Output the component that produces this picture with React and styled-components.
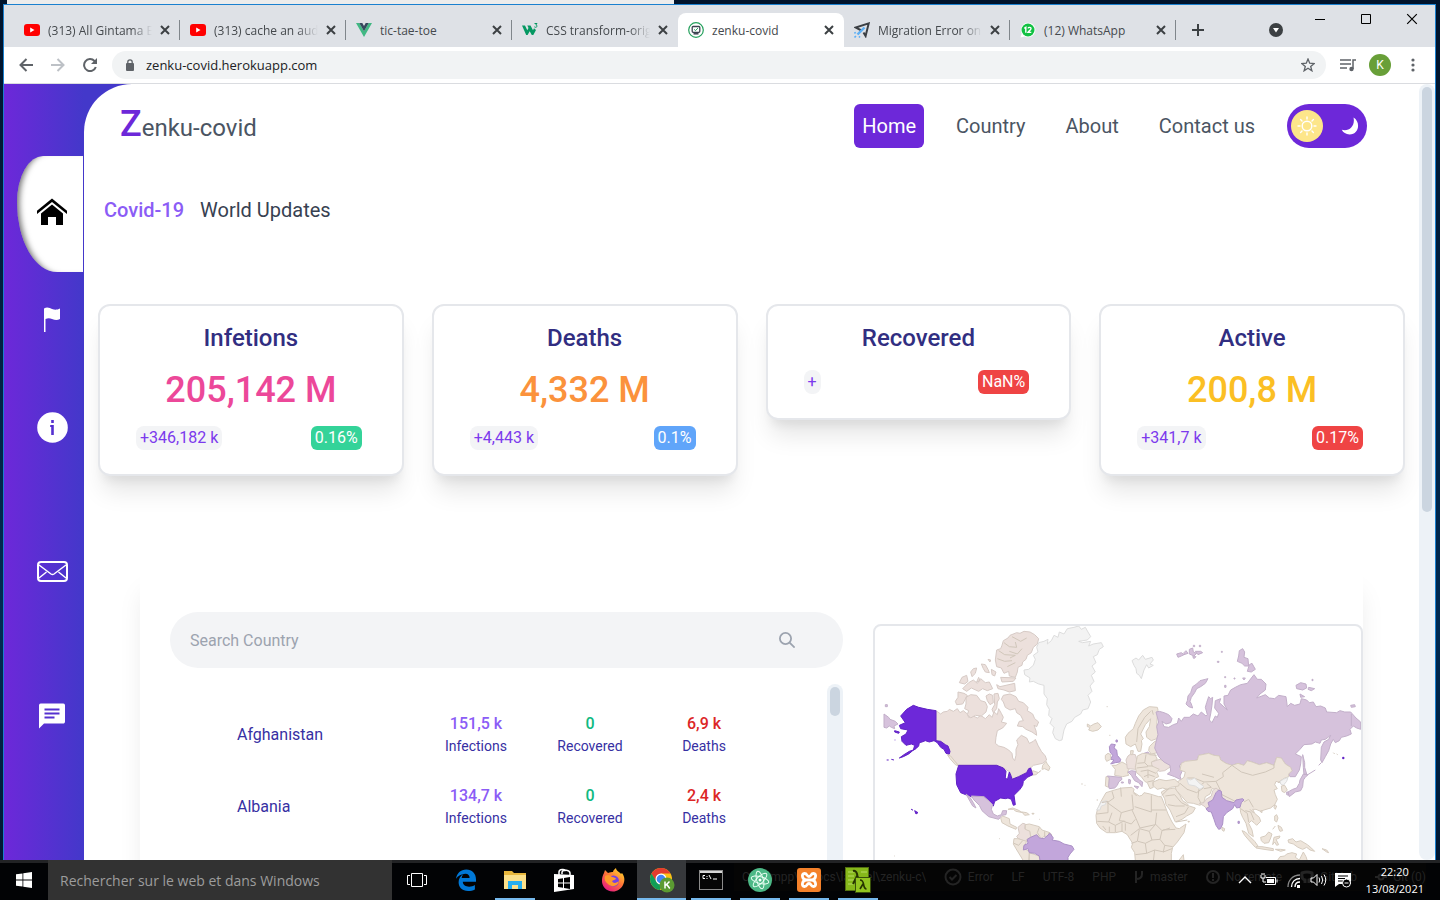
import React from "react";
import styled, { createGlobalStyle, css } from "styled-components";

const siteFont = `Roboto, "Open Sans", sans-serif`;
const systemFont = `"Open Sans", "Noto Sans", sans-serif`;

const GlobalStyle = createGlobalStyle`
  *, *::before, *::after { box-sizing: border-box; }
  body { margin: 0; background: #00132b; font-family: ${systemFont}; }
  button, input { font: inherit; border: 0; padding: 0; margin: 0; background: none; outline: 0; }
  h1, h2, p, ul { margin: 0; padding: 0; }
  ul { list-style: none; }
  a { color: inherit; text-decoration: none; }
  svg { display: block; flex: none; }
`;

/* ---------- desktop and browser window ---------- */

const Desktop = styled.div`
  height: 100vh;
  min-height: 600px;
  display: flex;
  flex-direction: column;
  overflow: hidden;
  background: linear-gradient(#00132b, #002a52 70%, #00132b);
`;

const BackWindowEdge = styled.div`
  flex: none;
  height: 4px;
  width: 46.3%;
  margin-left: 7px;
  background: #ececec;
`;

const BrowserWindow = styled.section`
  flex: 1;
  min-height: 0;
  margin: 0 4px 0 3px;
  display: flex;
  flex-direction: column;
  border: 1px solid #1a80cf;
  border-bottom: 0;
  background: #fff;
`;

const TabStrip = styled.div`
  flex: none;
  height: 42px;
  padding-left: 10px;
  display: flex;
  align-items: flex-end;
  background: #dee1e6;
`;

const Tab = styled.div`
  position: relative;
  width: 166px;
  height: 34px;
  padding: 0 10px;
  display: flex;
  align-items: center;
  gap: 8px;
  font-size: 12px;
  color: #45494d;
  ${(p) => p.$divided && css`
    &::after {
      content: "";
      position: absolute;
      right: 0;
      top: 7px;
      height: 20px;
      width: 1px;
      background: #80868b;
    }
  `}
  ${(p) => p.$active && css`
    background: #fff;
    border-radius: 8px 8px 0 0;
  `}
`;

const TabTitle = styled.span`
  flex: 1;
  min-width: 0;
  overflow: hidden;
  white-space: nowrap;
  ${(p) => p.$fade && css`
    mask-image: linear-gradient(90deg, #000 80%, transparent);
  `}
`;

const IconButton = styled.button`
  display: flex;
  align-items: center;
  justify-content: center;
  width: ${(p) => p.$width || 32}px;
  height: ${(p) => p.$height || 32}px;
  color: ${(p) => p.$color || "#5f6368"};
`;

const TabListButton = styled(IconButton)`
  margin-left: auto;
`;

const WindowControls = styled.div`
  align-self: flex-start;
  display: flex;
  margin-left: 7px;
`;

const Toolbar = styled.div`
  flex: none;
  height: 37px;
  padding: 0 6px;
  display: flex;
  align-items: center;
  border-bottom: 1px solid #dadce0;
`;

const AddressBar = styled.label`
  flex: 1;
  height: 28px;
  margin: 0 6px;
  padding: 0 2px 0 13px;
  display: flex;
  align-items: center;
  gap: 11px;
  border-radius: 14px;
  background: #f1f3f4;
  color: #5f6368;
`;

const AddressInput = styled.input`
  flex: 1;
  min-width: 0;
  font-size: 13px;
  color: #202124;
`;

const Avatar = styled.button`
  width: 22px;
  height: 22px;
  margin: 0 6px 0 5px;
  border-radius: 50%;
  background: #689f38;
  color: #fff;
  font-family: Roboto, sans-serif;
  font-size: 12px;
`;

/* ---------- site ---------- */

const Site = styled.div`
  flex: 1;
  min-height: 0;
  display: flex;
  overflow: hidden;
  font-family: ${siteFont};
  background: linear-gradient(90deg, #6d28d9, #4338ca 80px);
`;

const Sidebar = styled.nav`
  flex: none;
  width: 80px;
  padding-top: 72px;
  display: flex;
  flex-direction: column;
  color: #fff;
`;

const SideCurrent = styled.a`
  height: 116px;
  margin: 0 1px 32px 13px;
  padding: 0 16px 4px 20px;
  display: flex;
  align-items: center;
  color: #000;
  background: #fff;
  border-radius: 26px 0 0 40px / 46px 0 0 70px;
  box-shadow: inset 7px 0 6px -5px rgba(0, 0, 0, 0.6);
`;

const SideGroup = styled.div`
  padding-left: 32px;
  display: flex;
  flex-direction: column;
  gap: ${(p) => p.$gap}px;
  margin-bottom: 112px;
`;

const SideLink = styled.a`
  width: 32px;
  height: 32px;
  display: flex;
  align-items: center;
  justify-content: center;
`;

const Main = styled.main`
  flex: 1;
  min-width: 0;
  background: #fff;
  border-top-left-radius: 48px;
`;

const ScrollTrack = styled.div`
  flex: none;
  width: 16px;
  padding: 3px;
  border-radius: 8px;
  background: #edf2f7;
`;

const ScrollThumb = styled.div`
  height: ${(p) => p.$size};
  border-radius: 5px;
  background: #cbd5e0;
`;

const PageScroll = styled.div`
  display: flex;
  background: #fff;
`;

const Header = styled.header`
  height: 64px;
  padding: 20px 52px 0 36px;
  display: flex;
  align-items: center;
  justify-content: space-between;
`;

const Brand = styled.a`
  display: flex;
  align-items: baseline;
  font-size: 24px;
  line-height: 44px;
  color: #4b5563;
`;

const BrandInitial = styled.span`
  font-size: 36px;
  font-weight: 500;
  color: #6d28d9;
`;

const Menu = styled.nav`
  display: flex;
  align-items: center;
  gap: 24px;
`;

const MenuLink = styled.a`
  padding: 0 8px;
  border-radius: 6px;
  font-size: 20px;
  line-height: 44px;
  color: ${(p) => (p.$current ? "#fff" : "#4b5563")};
  background: ${(p) => (p.$current ? "#6d28d9" : "transparent")};
`;

const ThemeSwitch = styled.label`
  width: 80px;
  height: 44px;
  padding: 0 8px 0 4px;
  display: flex;
  align-items: center;
  justify-content: space-between;
  border-radius: 22px;
  background: #6d28d9;
  color: #fff;
`;

const SwitchInput = styled.input`
  appearance: none;
  position: absolute;
  width: 32px;
  height: 32px;
`;

const SwitchKnob = styled.span`
  width: 32px;
  height: 32px;
  display: flex;
  align-items: center;
  justify-content: center;
  border-radius: 50%;
  background: #fde68a;
`;

const PageTitle = styled.h1`
  margin: 48px 20px 80px;
  font-size: 20px;
  font-weight: 400;
  line-height: 28px;
  color: #374151;
`;

const TitleAccent = styled.span`
  margin-right: 16px;
  font-weight: 500;
  color: #8b5cf6;
`;

const CardGrid = styled.section`
  min-height: 172px;
  padding: 0 14px;
  display: grid;
  grid-template-columns: repeat(4, 1fr);
  align-items: start;
  gap: 28px;
`;

const Card = styled.article`
  padding: 16px 36px 24px;
  border: 2px solid #e5e7eb;
  border-radius: 12px;
  background: #fff;
  box-shadow: 0 20px 25px -5px rgba(0, 0, 0, 0.1), 0 10px 10px -5px rgba(0, 0, 0, 0.06);
`;

const CardTitle = styled.h2`
  margin-bottom: 16px;
  font-size: 24px;
  font-weight: 500;
  line-height: 32px;
  text-align: center;
  color: #312e81;
`;

const CardValue = styled.p`
  margin-bottom: 16px;
  font-size: 36px;
  font-weight: 500;
  line-height: 40px;
  text-align: center;
  white-space: nowrap;
  color: ${(p) => p.$color};
`;

const CardFooter = styled.div`
  padding-right: 4px;
  display: flex;
  justify-content: space-between;
  font-size: 16px;
  line-height: 24px;
`;

const Delta = styled.span`
  padding: 0 4px;
  border-radius: 8px;
  background: #f3f4f6;
  color: #7c3aed;
`;

const Rate = styled.span`
  padding: 0 4px;
  border-radius: 6px;
  background: ${(p) => p.$color};
  color: #fff;
`;

const Panel = styled.section`
  margin: 88px 56px 0;
  padding: 48px 0 0 30px;
  display: grid;
  grid-template-columns: 673fr 490fr;
  gap: 30px;
  background: #fff;
  box-shadow: 0 25px 25px -5px rgba(0, 0, 0, 0.1);
`;

const SearchBox = styled.label`
  height: 56px;
  padding: 0 48px 0 20px;
  display: flex;
  align-items: center;
  border-radius: 28px;
  background: #f3f4f6;
  color: #9ca3af;
`;

const SearchInput = styled.input`
  flex: 1;
  min-width: 0;
  font-size: 16px;
  &::placeholder { color: #9ca3af; opacity: 1; }
`;

const CountryList = styled.div`
  height: 320px;
  margin-top: 16px;
  display: flex;
`;

const CountryTable = styled.table`
  flex: 1;
  height: 144px;
  margin: 14px 66px 0 67px;
  table-layout: fixed;
  border-collapse: collapse;
`;

const CountryRow = styled.tr`
  height: 72px;
`;

const CountryName = styled.th`
  padding: 0;
  font-size: 16px;
  font-weight: 400;
  text-align: left;
  color: #3730a3;
`;

const StatCell = styled.td`
  width: 114px;
  padding: 0;
  text-align: center;
`;

const StatValue = styled.div`
  font-size: 16px;
  font-weight: 500;
  line-height: 24px;
  color: ${(p) => p.$color};
`;

const StatLabel = styled.div`
  font-size: 14px;
  line-height: 20px;
  color: #3730a3;
`;

const MapCard = styled.div`
  margin-top: 12px;
  border: 2px solid #e5e7eb;
  border-radius: 8px;
  overflow: hidden;
  svg { width: 100%; height: auto; }
`;

/* ---------- taskbar ---------- */

const Taskbar = styled.footer`
  position: relative;
  flex: none;
  height: 40px;
  display: flex;
  background: #020305;
  border-top: 3px solid #222325;
  color: #fff;
`;

const GhostStatus = styled.div`
  position: absolute;
  left: 734px;
  right: 14px;
  top: 0;
  height: 28px;
  padding-left: 8px;
  display: flex;
  align-items: center;
  gap: 18px;
  font-family: Roboto, sans-serif;
  font-size: 12px;
  white-space: nowrap;
  overflow: hidden;
  background: #050505;
  color: #242424;
`;

const GhostPath = styled.span`
  width: 187px;
  overflow: hidden;
`;

const GhostItem = styled.span`
  display: flex;
  align-items: center;
  gap: 6px;
`;

const TaskbarItems = styled.div`
  position: relative;
  flex: 1;
  margin-top: -3px;
  display: flex;
`;

const StartButton = styled.button`
  width: 48px;
  display: flex;
  align-items: center;
  justify-content: center;
`;

const TaskSearch = styled.input`
  width: 344px;
  padding: 0 12px;
  font-size: 14px;
  background: #323232;
  &::placeholder { color: #9d9d9d; opacity: 1; }
`;

const TaskButton = styled.button`
  width: 49px;
  display: flex;
  align-items: center;
  justify-content: center;
  ${(p) => p.$open && css`
    background: linear-gradient(#76b9ed, #76b9ed) bottom / 40px 2px no-repeat;
  `}
  ${(p) => p.$current && css`
    background: linear-gradient(#76b9ed, #76b9ed) bottom / 100% 2px no-repeat #36383b;
  `}
`;

const Tray = styled.div`
  margin-left: auto;
  padding-right: 16px;
  display: flex;
  align-items: center;
  gap: 8px;
`;

const Clock = styled.time`
  margin-left: 6px;
  font-size: 11px;
  line-height: 17px;
  text-align: center;
`;

/* ---------- small icons ---------- */

const Cross = ({ size = 10, weight = 2 }) => (
  <svg width={size} height={size} viewBox="0 0 10 10" stroke="currentColor" strokeWidth={weight}>
    <path d="M1 1l8 8M9 1l-8 8" />
  </svg>
);

const YouTubeIcon = () => (
  <svg width="16" height="16" viewBox="0 0 16 16">
    <rect y="2" width="16" height="12" rx="3" fill="#f00" />
    <path d="M6.2 5.5v5l4.3-2.5z" fill="#fff" />
  </svg>
);
const VueIcon = () => (
  <svg width="16" height="16" viewBox="0 0 16 16">
    <path d="M0 1h3.3L8 9.2 12.7 1H16L8 15z" fill="#41b883" />
    <path d="M3.3 1h3L8 4l1.7-3h3L8 9.2z" fill="#35495e" />
  </svg>
);
const W3Icon = () => (
  <svg width="16" height="16" viewBox="0 0 16 16" fill="#059862">
    <path d="M0 3.500h3l2.300 4.700L6.500 6 5.300 3.500h3.200L11 8.200l1-2 2 1.800-2.700 5H9.800L7.700 9.200 5.600 13H4.200z" />
    <path d="M12.500 1.500h2.500L13.800 3c1.600 0 1.600 2.300-.2 2.300-.6 0-1-.2-1.300-.6" fill="none" stroke="#059862" strokeWidth="1" />
  </svg>
);
const ZenkuIcon = () => (
  <svg width="16" height="16" viewBox="0 0 16 16" fill="none">
    <circle cx="8" cy="8" r="7.3" stroke="#24a05c" strokeWidth="1.2" />
    <rect x="4.2" y="4.5" width="7.6" height="5.8" rx="1" stroke="#3c4350" strokeWidth="1.3" />
    <path d="M5.500 11.800h5" stroke="#3c4350" strokeWidth="1.500" />
    <path d="M6.200 7.400l1.300 1.200 2.400-2.500" stroke="#24a05c" strokeWidth="1" />
  </svg>
);
const PlaneIcon = () => (
  <svg width="16" height="16" viewBox="0 0 16 16" fill="none">
    <path d="M7.500 8.500L1.500 5.500 14.700 1.400 11.600 14 9.500 10.500" stroke="#3b3f44" strokeWidth="2" />
    <path d="M10.500 5.500l-7 7" stroke="#5eb0f5" strokeWidth="2.400" />
    <path d="M.5 15.500l1.500-1.500M5 15.500l1-1.200M.3 11.300l1.500-1" stroke="#5eb0f5" strokeWidth="1.600" />
  </svg>
);
const WhatsAppIcon = () => (
  <svg width="16" height="16" viewBox="0 0 16 16">
    <path d="M.5 15.500l1.200-4A7.300 7.300 0 1 1 4.600 14.400z" fill="#fff" />
    <circle cx="8" cy="8" r="6.500" fill="#12c143" />
    <path d="M4.300 6.300l1.500-1v5.400M8 6.400c.5-1.500 3.200-1.300 3 .4-.1 1.200-2 2-3 3.600h3.300" fill="none" stroke="#fff" strokeWidth="1.400" />
  </svg>
);

const tabs = [
  { title: "(313) All Gintama En", icon: YouTubeIcon, fade: true, divided: true },
  { title: "(313) cache an audi", icon: YouTubeIcon, fade: true, divided: true },
  { title: "tic-tae-toe", icon: VueIcon, divided: true },
  { title: "CSS transform-origi", icon: W3Icon, fade: true },
  { title: "zenku-covid", icon: ZenkuIcon, active: true },
  { title: "Migration Error on", icon: PlaneIcon, fade: true, divided: true },
  { title: "(12) WhatsApp", icon: WhatsAppIcon, divided: true },
];

const cards = [
  { title: "Infetions", value: "205,142 M", color: "#ec4899", delta: "+346,182 k", rate: "0.16%", rateColor: "#34d399" },
  { title: "Deaths", value: "4,332 M", color: "#fb923c", delta: "+4,443 k", rate: "0.1%", rateColor: "#60a5fa" },
  { title: "Recovered", delta: "+", rate: "NaN%", rateColor: "#ef4444" },
  { title: "Active", value: "200,8 M", color: "#fbbf24", delta: "+341,7 k", rate: "0.17%", rateColor: "#ef4444" },
];

const countries = [
  { name: "Afghanistan", infections: "151,5 k", recovered: "0", deaths: "6,9 k" },
  { name: "Albania", infections: "134,7 k", recovered: "0", deaths: "2,4 k" },
];

/* ---------- world map ---------- */

const sand = { fill: "#eee5db", stroke: "#d6ccc0" };
const rose = { fill: "#ece0dc", stroke: "#d6cac5" };
const mist = { fill: "#f3f3f3", stroke: "#dcdcdc" };
const lilac = { fill: "#d6c2dc", stroke: "#c2afc9" };
const orchid = { fill: "#c2a6db", stroke: "#ab90c6" };
const violet = { fill: "#6d28d9", stroke: "#5f20c4" };
const lines = { fill: "none", stroke: "#d0c6ba" };

const westShapes = [
  [rose, "M228 302L242 312 250 306 262 304 268 298 280 304 292 296 300 308 310 302 322 312 326 322 340 318 352 324 362 316 376 326 388 314 396 322 402 306 412 314 416 296 424 310 430 322 424 336 440 340 428 354 412 362 408 382 406 400 416 408 432 412 446 420 456 430 458 444 464 452 468 436 468 418 474 404 470 390 484 376 500 384 508 400 520 394 526 388 534 406 544 424 556 438 560 450 548 460 520 466 506 480 498 488 478 498 458 508 450 486 430 474 410 466H296L268 438 260 422 240 398 228 392Z"],
  [rose, "M430 256l20-4 18 8 8 14 14 4 14 14-2 10 16 10 6 14 12 10-6 14-8-4 6 16 2 14-14-10-18-8-10-8-16-2 6-14 12-2-8-16-12-8-4-12-16 4-14-8-6-16-6-8Z"],
  [rose, "M318 262l14-8 18 2 12 16 14 4 6 14-4 16-14 12-18-2-14 8-10-10 4-12-12-6 4-14ZM294 246l18 4 10 6-14 26-18 2-4-10 8-12ZM378 258l10-6 10 4 2 22-10 6-8-12ZM402 252l12-2 4 16-6 10-2 20-10 12-4-10 8-14Z"],
  [rose, "M430 92l14-8 6-8 20-8 10 2 12-6 18 2 14 8 12 12-4 16-12 10-6 16-12 8-4 12-10 8-2 10-12 6-2 14-6 16-18-4-2-14-14 6-8-16-14-4-4-20 4-30 12-4 4-10Z"],
  [lines, "M432 98l16 12 22 2-4-16M416 122l18 12 32 2-16 8M412 146l22 8 22-2M456 80l26 14 18-10M448 124l24 8 14-16M442 170l24-12"],
  [rose, "M298 218l8-16 14-6 4 18-10 8ZM326 218l14-8 12 10 10-14 14 12 12-2 10 20-16 6-14-6-12 8-22-10-14 10-12-8ZM410 224l10 6 44-10 2 22-18 4-16-6-18-4ZM332 186l8-10 10-2-4 16-10 10ZM364 162l12 2 8 14 4 10-12-2-6-10ZM394 178l14 8-4 12-8-4ZM422 202l46 2-8 10-34 2ZM384 148l8 2-2 6ZM350 216l6-14 4 10Z"],
  [sand, "M518 482l18 6 6-6-14 12-14 2ZM548 466l10-12 4 8 8 10-4 10-12-6-8 2ZM262 434l10 4 24 30-10-4-16-18ZM682 342l10 6 10-6 12-4 10 12-10 10-16 4-12-4 4-8-8-2Z"],
  [mist, "M536 98L552 94 564 88 562 102 574 92 582 76 594 82 598 66 612 72 622 56 642 52 656 48 664 58 676 52 684 66 692 80 682 90 656 94 668 98 692 94 686 108 700 102 724 98 730 110 718 118 712 134 700 140 708 158 696 168 706 186 694 196 702 214 690 228 696 244 684 256 692 276 684 296 668 300 662 312 644 322 636 334 620 342 612 360 606 390 598 392 586 386 578 368 582 352 570 340 576 326 566 316 568 298 560 284 562 266 552 252 552 226 536 222 520 214 508 216 510 204 494 194 492 180 506 178 520 166 526 148 520 136 534 126 530 112Z"],
  [mist, "M816 152l12-8 8 6 12-14 8 12 20-6 4 8-10 12 10 4-14 8-6-10-8 16-8 26-6-10-8-6-2-14-6-10Z"],
  [violet, "M228 302v90l14 2 14 10 8 4 6 16-2 8-10-2-6-12-10-6-10-14-10-6-14 4-12-4-10 4-8 2-2 10-8 8-10 6-12 10-16 8-12 4 14-10 16-10 12-4 4-14-10-4-16 4-12-12-2-14 14-8 6-12-22-4-4-10 18-8-14-20 18-20 20-12 16 6 26 6Z"],
  [violet, "M104 362l14 4-2 4-12-4ZM154 598l4 2ZM164 602l10 6-6 4ZM80 450h6M94 448l8 2M104 390h2"],
  [violet, "M296 466H410l20 8 8 10-2 18 6 8 6-24 6 14 2 8 20-8 24-12 6-12 6-2 6 20-16 8-12 12-2 12-8 12-18 18 4 28-6 2-6-18-10-4-8 2-14-2-18 10-4 14-10-8-4-8-14-6-10 0-16-2-24-8-20-8-12-24-2-32Z"],
  [lilac, "M72 312l14 10 4 6 16 6 8 8-12 6 2 8-10-4-6-4-8 6-8-2ZM76 284h6v6h-6Z"],
  [lilac, "M318 552l12 10 10 16 8 16-10-6-8-14ZM334 558l38 2 16 14 10 10-4 14 6 14 12 6 12-4 4-12h12l-2 12-12 2-10 12-30-8-20-18-8-16-16-16Z"],
  [sand, "M422 624l6-6 20 8 2 16 20 10-2 6-24-10-18-10ZM444 598l14-4 16 6 14 8-20-4-8-6ZM486 606l14 2 8 6-14 2ZM516 610h6v2h-6Z"],
  [rose, "M474 652l14-12 8 2-2 14 16 6 2 20-12 6 0 8-24-10-6-6 8-10Z"],
  [sand, "M496 644l12-2 30 8 8 10 24 8 6 8-10 6-12-4-10 8-14-10-18 6-2-18-14-6ZM474 686l26 8-10 18 18 14 0 26H490l-22-36-8-14 2-16ZM508 728l28 10 6 14h-36Z"],
  [lines, "M538 652l-6 16 8 12M554 664v18M566 668v14M462 700l14 6 12-14M508 730l12-4"],
  [orchid, "M512 682L530 674 538 684 552 686 570 670 580 684 576 690 598 694 612 702 636 708 642 718 630 732 624 742 624 752H540L538 738 524 730 508 728 504 716 490 720 492 706 504 700 502 688Z"],
  [orchid, "M748 410l6-8 12 2-4 10 8 6 2 16 10 12-2 8-14 2-14 4 10-12-10-2 6-12-8-10ZM768 390h4v6h-4Z"],
  [sand, "M736 436l8-6 8 4 0 14-12 6-4-8ZM756 466l12 0 18-10 18 10 4 10-6 10 4 10-18 4-24-4 2-18ZM738 500h10l-2 32-10-4Z"],
  [lilac, "M742 498l42 4 2 6-10 8-4 10-8 8-16 2-2-8 2-24ZM852 430l12-4 4 6-12 4ZM784 516h6v3h-6Z"],
  [rose, "M804 438l8-6 14 2 6 22-6 14 2 8-26-2-2-16-2-10ZM874 456l26-8 28 14 4 8-18 12-16 2-14-8-12-4Z"],
  [lilac, "M804 486l10-4 14 2-2 12 12 14 10 6-2 14-10-12-12-6-10-16ZM822 528l14 2-4 6ZM806 508l6 2-2 12-4-2Z"],
  [sand, "M832 438l16-8 20 2 14-4 10 20-18 8 2 12 22 10-8 8 6 14-10 4-8 14 2 14-10 4-8-18-8-4-10-14-14-12-4-16Z"],
  [lines, "M832 460l22-2 10 10 14 0M854 458l4-24M830 474l34-4M842 484l22-4 24 10M852 500l14-6 18 6M862 516l18-4M868 434l22 2M864 480v24"],
  [sand, "M868 410l14-14 8-4 2 36-18 4-8-10ZM892 292L868 290 850 300 836 318 826 340 820 356 804 370 796 382 798 402 812 410 826 402 834 424 842 424 846 402 844 392 850 386 842 372 856 344 872 326 868 350 858 366 860 382 874 392 890 386 898 368 890 348 892 318 894 300ZM812 422h8l-2 12h-6Z"],
  [lines, "M872 304l-18 18-20 34-4 40M876 300l4 14"],
  [sand, "M738 548L764 540 786 534 816 532 822 538 820 546 838 558 846 556 852 548 870 552 896 560 904 560 912 580 924 612 936 636 948 654 958 656 978 642 972 668 952 696 938 712 934 730 934 752H826L824 728 814 712 818 700 808 684 802 674 786 664 766 668 740 668 720 654 710 640 708 616 712 600 722 576Z"],
  [mist, "M710 600l14-24 16-4-4 12-12 4-4 12Z"],
  [lines, "M726 578l18-4 0 34-34 4M756 544l6 20-20 14 42 30-6 24M784 560l-2-28M784 608l36-10-4-44M816 600l14 30M824 590l50 16v-50M874 600h44M830 630l10 24 46-10 4-36M886 642l20 20 24-8M712 634l34 2 20 10v20M746 636l10-28M766 646l24-12 24 8 12-14M786 664v-24M812 676l26-20 30 8 18-20M838 658l-6 36-18 6M868 664l8 26-20 10-22-6M876 690l24-2 6-26M900 688l14 18-4 20 26-10M856 700l4 30-34 4M860 730l24-10 28 6M884 720l-4 34M914 706l24 4M908 660l38-2M728 648l10 12M748 650v16M796 640v22M778 632l18 2M820 548l10 10"],
  [lines, "M418 686h2M102 738h2M664 522h4M674 526h2M710 570h4M740 290h3M748 376h3M538 628h2"],
];

const eastShapes = [
  [lilac, "M48 306L58 304 72 308 86 314 96 326 92 338 78 342 66 334 72 350 86 352 100 344 112 340 116 324 124 334 132 322 148 322 160 312 174 318 184 306 198 318 202 314 196 292 200 278 206 260 212 266 218 262 216 286 212 312 208 330 216 338 226 318 232 322 236 310 224 294 226 272 242 266 238 278 262 300 252 282 252 258 264 256 272 240 286 232 302 224 322 220 334 204 342 194 352 208 364 208 378 222 376 240 360 252 350 264 376 254 388 264 404 266 416 256 438 260 442 290 452 280 464 286 480 282 484 266 500 270 508 278 520 276 528 290 542 288 556 294 560 306 590 308 600 302 614 306 632 306 648 324 662 336V358L650 354 640 348 630 358 634 372 620 378 604 382 598 392 586 398 580 388 572 402 566 422 556 440 546 458 542 450 544 412 552 396 566 388 572 376 556 388 544 390 540 400 526 396 516 402 492 404 480 418 466 432 484 440 482 462 478 480 466 500 450 500 446 492 456 482 452 472 436 462 424 444 410 442 402 466 380 458 358 464 336 456 322 452 312 466 294 460 276 466 258 460 242 450 238 438 222 436 206 430 176 436 172 450 152 454 124 460 118 468 126 484 120 498 124 510 104 500 82 492 92 484 90 466 72 456 64 448 56 440 44 414 48 396 54 374 50 350 56 336Z"],
  [lilac, "M204 206l-8 2-16 4-10 10-12 8-6 18-8 10-2 14-4 10 8 8 12 4-4-12-4-8 4-12 10-14 6-12 12-6 14-10ZM298 122l10-6 6 10-2 16 12 4 2 22-12 0-8-8-14-6 4-16ZM328 164l8-4 10 18-12 8-12-2ZM468 226l14-8 16 4 2 12-12 6-18-4ZM506 232l18 4-10 6-10-4ZM480 252l14 8-12 2ZM632 286l12-2 2 6-12 2ZM110 132l14-4 8 6-8 4-10 4ZM132 128l6-6 6 8-12 4ZM148 118l10-4 2 12 10 4-8 8-14-6ZM166 124h16l6 4-14 6ZM158 140h10l-6 6ZM178 106h4v4h-4ZM160 106h4v4h-4ZM244 124h3v3h-3ZM232 154h5v3h-5ZM254 200h3v3h-3ZM282 204h3v3h-3ZM308 204l8 0-4 6ZM516 208h3v4h-3ZM254 226h4v6h-4Z"],
  [lilac, "M488 434l6 24 0 14 6 20-8 2-2-22ZM490 492l14 2-8 8-6 8-2 20-6 12-16 4-18 14-4-14 14-8 12-4 8-14 2-10ZM440 546h4l2 10-6-2Z"],
  [lilac, "M634 312v36M500 496l26-16M536 466l8-8"],
  [lines, "M580 428l4 4M590 432l3 2"],
  [violet, "M608 442h4v4h-4Z"],
  [sand, "M124 460L136 454 172 450 176 436 206 430 222 436 238 438 242 450 258 460 276 466 294 460 312 466 322 452 336 456 358 464 380 458 402 466 410 442 424 444 436 462 452 472 456 482 446 492 446 500 430 506 420 518 408 514 404 524 412 536 402 540 406 554 412 568 404 584 392 594 372 600 362 604 348 598 338 598 344 610 358 622 362 634 350 646 342 638 334 632 326 640 336 660 340 680 326 670 318 640 308 622 302 608 300 592 284 582 252 574 242 556 232 538 216 536 210 552 196 560 192 576 180 586 160 580 142 578 126 560 108 540 104 520 118 512 132 502 136 486 120 480Z"],
  [lines, "M276 466l-28 22 2 12-22 14-36 2-30-12-20 0M228 514l10 20 8 20 40 20M276 466l28 20 34 10 38-10 26-12 0-10M192 518l-14 10-4 34 10 20M222 502l-36-10M250 574l34 6M312 576l14-8 14 24M316 602l16 4 10 24M302 596l20 14 4 26M414 518l14-10M142 538l28 10 22-16M120 520l24 20M200 520l14 12-22 4M330 598l12 12"],
  [mist, "M140 506l12 4 12-6 12 14 16 12-12 8-14-10-20-4ZM420 514l10-6 14-6-4 12-10 12-8-4Z"],
  [sand, "M424 528l10-2 8 14-8 8-8-4ZM40 516l18-8 20 4 26-4 14 12-2 8-24 4-10 6-14-4-16 4-12-10ZM64 546l14-8 26-4 16 22 8 16 12 8 8 8 18 6-8 14-18 10-14 10-20 8-8-18-8-18-12-16-4-18-8-14Z"],
  [lines, "M76 558l28-4 20 24 20 10M84 584l22 4 28 0M108 620l26-10 12-20M66 556l20-20M108 636l34-6"],
  [rose, "M178 580l14-2 6-10 16-10 4-16 10-8 10 8-8 16-10 18-8 18-12 2-8-8Z"],
  [orchid, "M228 548l8-8 8 4 2 18 14 10 22 6 6-8 20-4 4 4-8 8-4 14-10 2-6-10-6 12-18 12-10 12-2 22-6 14-6 2-8-12-6-18-8-22-10-2-6-8 10-6-4-12 14-8ZM294 634h4v6h-4Z"],
  [sand, "M246 652l8 4-2 8-6-4ZM306 662l10 4 16 16 12 12 10 14-8 4-20-22-12-14ZM350 710l16 0 34 6 0 6-28-4-24-4ZM362 682l14-4 10-12 10 6-4 12-6 14-14 2-8-8ZM402 682l18-4-2 6-10 4 8 16-6 2-6-10-6 8ZM404 618l6-4 4 10-4 12-6-4ZM414 646l10 6 4 10-8 2-4-8ZM398 658l8-10M444 690l14-4 10 10 14-4 20 12 10 8 12 12-14-4-10-8-12 6-14-6-14-10-14-4ZM404 584l6 4-4 10-4-6ZM360 604l6-2v6ZM412 752l8-12 14-2 6-6 16-4 14 4-4 10 12 8 12-24 8 14 4 12ZM116 752l14-18 2 18ZM406 718l16 0 14 2-14 4ZM546 716l14 4 6 8-6-2ZM144 634h4v2h-4Z"],
];

const WorldMap = () => (
  <svg viewBox="0 0 486 300" role="img" aria-label="World map of infections" strokeWidth="3" strokeLinejoin="round">
    <g transform="translate(-15 -16) scale(.33333)">
      {westShapes.map(([paint, d]) => <path key={d} d={d} {...paint} />)}
    </g>
    <g transform="translate(265 -16) scale(.33333)">
      {eastShapes.map(([paint, d]) => <path key={d} d={d} {...paint} />)}
    </g>
  </svg>
);

/* ---------- taskbar drawings ---------- */

const EdgeIcon = () => (
  <svg width="22" height="22" viewBox="0 0 22 22" fill="#0078d7">
    <path d="M1 9.800C1.800 4.300 5.700.5 11.300.5 17 .5 21 4.600 21 10.300v2.500H7.800c.2 3.300 3 4.900 6.300 4.900 2.300 0 4.200-.6 5.800-1.600v4.300c-2 1-4.200 1.500-6.800 1.500-6 0-9.500-3.500-9.500-8.600 0-3.600 1.800-6.500 5-8.300-1.300 1.300-1.800 2.600-1.900 4.100h7.900c0-2.700-1.300-4.300-4.200-4.300C6.300 4.800 2.900 7 1 9.800z" />
  </svg>
);
const FolderIcon = () => (
  <svg width="24" height="20" viewBox="0 0 24 20">
    <path d="M1 1h8l2 2h12v15H1z" fill="#e8b73c" />
    <path d="M1 5h22v14H1z" fill="#fbe08a" />
    <path d="M5 19v-8h14v8h-4v-4H9v4z" fill="#25aef0" />
  </svg>
);
const StoreIcon = () => (
  <svg width="22" height="24" viewBox="0 0 22 24">
    <path d="M6 7V4c0-3 6-3.500 7-1M9 6V4c1-3 8-2 8 1v2" fill="none" stroke="#fff" strokeWidth="1.500" />
    <path d="M1 6l20 1v14L1 24z" fill="#fff" />
    <path d="M5 11l5-.8v4.300H5zM11 10l6-1v5.500h-6zM5 15.500h5v4.300l-5-.8zM11 15.500h6V21l-6-1z" fill="#000" />
  </svg>
);
const FirefoxIcon = () => (
  <svg width="24" height="24" viewBox="0 0 24 24">
    <defs>
      <linearGradient id="fox" x1=".9" y1="0" x2=".2" y2="1">
        <stop offset="0" stopColor="#ffe226" /><stop offset=".5" stopColor="#ff7139" /><stop offset="1" stopColor="#e31587" />
      </linearGradient>
    </defs>
    <path d="M3 5l1-3 3 3c2-1 4-1 5-1 0-2 2-3 3-4 0 3 4 4 5 6l1-1c3 4 3 8 1 12-2 4-6 6.500-10 6.500C5 23.500.5 18 1 12c0-3 1-5 2-7z" fill="url(#fox)" />
    <circle cx="12.500" cy="13" r="5.500" fill="#7542e5" />
    <path d="M4 8c3-2 5-1 7 1 2 0 4 1 4 2-1 1-3 1-4 2 1 3 5 2 7 0-1 5-7 7-11 3-3-2-4-5-3-8z" fill="#ff9a2a" />
  </svg>
);
const ChromeIcon = () => (
  <svg width="26" height="26" viewBox="0 0 26 26">
    <circle cx="12" cy="12" r="11" fill="#fbc116" />
    <path d="M2.500 6.500A11 11 0 0 1 21.500 6.500H12L7 15z" fill="#e33b2e" />
    <path d="M2.500 6.500L8 15.500l5 2L11 23A11 11 0 0 1 2.500 6.500z" fill="#109d58" />
    <circle cx="12" cy="12" r="5.500" fill="#fff" /><circle cx="12" cy="12" r="4.300" fill="#4285f4" />
    <circle cx="18" cy="18" r="7.500" fill="#5b9a32" />
    <path d="M16 14.500v7M20.500 14.500l-4 4M17.800 17.500l3 4" stroke="#fff" strokeWidth="1.500" fill="none" />
  </svg>
);
const ConsoleIcon = () => (
  <svg width="24" height="20" viewBox="0 0 24 20" fill="none">
    <rect x=".5" y=".5" width="23" height="19" fill="#050505" stroke="#8a8a8a" />
    <path d="M1 2h22" stroke="#d8d8d8" strokeWidth="2" />
    <path d="M6 5.500H4v3h2M8 6v1M8 8v1M10 5l2 4M14 9h4" stroke="#fff" />
  </svg>
);
const AtomIcon = () => (
  <svg width="24" height="24" viewBox="0 0 24 24" fill="none">
    <circle cx="12" cy="12" r="12" fill="#4cb886" />
    <g stroke="#eafff4" strokeWidth="1">
      <ellipse cx="12" cy="12" rx="9" ry="3.300" transform="rotate(15 12 12)" />
      <ellipse cx="12" cy="12" rx="9" ry="3.300" transform="rotate(75 12 12)" />
      <ellipse cx="12" cy="12" rx="9" ry="3.300" transform="rotate(-45 12 12)" />
    </g>
    <circle cx="12" cy="12" r="1.500" fill="#fff" />
  </svg>
);
const XamppIcon = () => (
  <svg width="24" height="24" viewBox="0 0 24 24" fill="none">
    <rect width="24" height="24" rx="3" fill="#f4812a" />
    <path d="M9 12h6M9.500 12C5 12 4 5.500 7.500 5.500c3 0 2 3 4.500 3s1.500-3 4.500-3C20 5.500 19 12 14.500 12 19 12 20 18.500 16.500 18.500c-3 0-2-3-4.500-3s-1.500 3-4.500 3C4 18.500 5 12 9.500 12z" stroke="#fff" strokeWidth="2.800" />
  </svg>
);
const LambdaIcon = () => (
  <svg width="26" height="26" viewBox="0 0 26 26" fill="none">
    <rect x=".5" y=".5" width="23" height="23" fill="#86b81b" stroke="#53700f" />
    <path d="M3 5h6M3 9h6M3 13h6M3 17h6M16 5h6" stroke="#b8dc66" />
    <path d="M8 4c3-1 4 2 4.500 5l2 7M12 9l-4 8" stroke="#263300" strokeWidth="2" />
    <rect x="10.500" y="10.500" width="15" height="15" fill="#92c520" stroke="#38500a" />
    <path d="M15 13c2 0 3 1 3.500 4 .5 3 1 5 3 5M18 17l-3 5" stroke="#263300" strokeWidth="1.600" />
  </svg>
);

const apps = [
  { name: "Edge", icon: EdgeIcon },
  { name: "File explorer", icon: FolderIcon, open: true },
  { name: "Store", icon: StoreIcon },
  { name: "Firefox", icon: FirefoxIcon },
  { name: "Chrome", icon: ChromeIcon, current: true },
  { name: "Command prompt", icon: ConsoleIcon, open: true },
  { name: "Atom", icon: AtomIcon, open: true },
  { name: "XAMPP", icon: XamppIcon, open: true },
  { name: "Cmder", icon: LambdaIcon, open: true },
];

function BrowserChrome() {
  return (
    <>
      <TabStrip>
        {tabs.map(({ title, icon: Icon, active, fade, divided }) => (
          <Tab key={title} $active={active} $divided={divided}>
            <Icon />
            <TabTitle $fade={fade}>{title}</TabTitle>
            <IconButton $width={10} $height={10} $color="#3c4043" aria-label="Close tab"><Cross /></IconButton>
          </Tab>
        ))}
        <IconButton $width={44} $height={34} $color="#3c4043" aria-label="New tab">
          <svg width="12" height="12" stroke="currentColor" strokeWidth="2"><path d="M6 0v12M0 6h12" /></svg>
        </IconButton>
        <TabListButton $width={28} $height={34} aria-label="Search tabs">
          <svg width="14" height="14"><circle cx="7" cy="7" r="7" fill="#3c4043" /><path d="M4 5h6L7 9.500z" fill="#fff" /></svg>
        </TabListButton>
        <WindowControls>
          <IconButton $width={46} $height={28} $color="#000" aria-label="Minimize">
            <svg width="10" height="10" stroke="currentColor"><path d="M0 5.500h10" /></svg>
          </IconButton>
          <IconButton $width={46} $height={28} $color="#000" aria-label="Maximize">
            <svg width="10" height="10" fill="none" stroke="currentColor"><path d="M.5.5h9v9h-9z" /></svg>
          </IconButton>
          <IconButton $width={46} $height={28} $color="#000" aria-label="Close"><Cross size={12} weight={1} /></IconButton>
        </WindowControls>
      </TabStrip>
      <Toolbar>
        <IconButton aria-label="Back">
          <svg width="14" height="14" fill="none" stroke="currentColor" strokeWidth="2"><path d="M14 7H2M7.500 1L1.500 7l6 6" /></svg>
        </IconButton>
        <IconButton $color="#bdc1c6" aria-label="Forward">
          <svg width="14" height="14" fill="none" stroke="currentColor" strokeWidth="2"><path d="M0 7h12M6.500 1l6 6-6 6" /></svg>
        </IconButton>
        <IconButton aria-label="Reload">
          <svg width="14" height="14" fill="none" stroke="currentColor" strokeWidth="2"><path d="M12.800 9A6 6 0 1 1 11.500 3L12.500 4.500" /><path d="M14 0v6H8z" fill="currentColor" stroke="none" /></svg>
        </IconButton>
        <AddressBar>
          <svg width="10" height="12" fill="none"><rect x="1" y="4" width="8" height="8" rx="1" fill="currentColor" /><path d="M2.800 4.500V3a2.200 2.200 0 0 1 4.400 0v1.500" stroke="currentColor" strokeWidth="1.300" /></svg>
          <AddressInput aria-label="Address" defaultValue="zenku-covid.herokuapp.com" />
          <IconButton aria-label="Bookmark">
            <svg width="14" height="14" viewBox="0 0 14 14" fill="none" stroke="currentColor" strokeWidth="1.300"><path d="M7 1l1.700 4.200 4.500.3-3.500 2.900 1.200 4.400L7 10.300l-3.900 2.500 1.200-4.400L.8 5.500l4.500-.3z" /></svg>
          </IconButton>
        </AddressBar>
        <IconButton aria-label="Media controls">
          <svg width="16" height="13" fill="none" stroke="currentColor" strokeWidth="1.500"><path d="M0 1h11M0 5h11M0 9h7M13 10V1h3" /><circle cx="11.500" cy="10" r="2.200" fill="currentColor" stroke="none" /></svg>
        </IconButton>
        <Avatar>K</Avatar>
        <IconButton aria-label="Menu">
          <svg width="4" height="14" fill="currentColor"><circle cx="2" cy="2" r="1.600" /><circle cx="2" cy="7" r="1.600" /><circle cx="2" cy="12" r="1.600" /></svg>
        </IconButton>
      </Toolbar>
    </>
  );
}

function SideNav() {
  return (
    <Sidebar aria-label="Sections">
      <SideCurrent href="#home" aria-label="Home">
        <svg width="30" height="28" viewBox="0 0 30 28"><path d="M15 .5L30 12.800V16L15 4 0 16v-3.200z" /><path d="M4 15.500L15 6.500l11 9V27h-7v-8h-8v8H4z" /></svg>
      </SideCurrent>
      <SideGroup $gap={75}>
        <SideLink href="#country" aria-label="Country">
          <svg width="18" height="26" viewBox="0 0 18 26" fill="#fff"><path d="M1 1.500C4-.3 7 1 9 2c3 1 5 1 8-.5V12c-3 1.500-5 1-8 0-2-.8-4-1-6.500 0v13H1z" /></svg>
        </SideLink>
        <SideLink href="#about" aria-label="About">
          <svg width="31" height="31" viewBox="0 0 31 31"><circle cx="15.500" cy="15.500" r="15.300" fill="#fff" /><path d="M14.200 8h2.600v3h-2.600zM13.200 13h3.600v10h-2.600v-8h-1z" fill="#5530d0" /></svg>
        </SideLink>
      </SideGroup>
      <SideGroup $gap={113}>
        <SideLink href="#contact" aria-label="Contact us">
          <svg width="31" height="21" viewBox="0 0 31 21" fill="none" stroke="#fff" strokeWidth="1.500"><rect x="1" y="1" width="29" height="19" rx="3" strokeWidth="2" /><path d="M2 4l12 9q1.500 1 3 0l12-9M2 17l7.500-6M29 17l-7.500-6" /></svg>
        </SideLink>
        <SideLink href="#chat" aria-label="Chat">
          <svg width="26" height="26" viewBox="0 0 26 26"><path d="M2.500.5h21A2 2 0 0 1 26 2.500v16a2 2 0 0 1-2.500 2H5L0 25.500v-23A2 2 0 0 1 2.500.5z" fill="#fff" /><path d="M5.500 6.500h15M5.500 10.500h15M5.500 14.500h10" stroke="#5530d0" strokeWidth="2" /></svg>
        </SideLink>
      </SideGroup>
    </Sidebar>
  );
}

function SiteHeader() {
  return (
    <Header>
      <Brand href="#home"><BrandInitial>Z</BrandInitial>enku-covid</Brand>
      <Menu>
        <MenuLink href="#home" $current>Home</MenuLink>
        <MenuLink href="#country">Country</MenuLink>
        <MenuLink href="#about">About</MenuLink>
        <MenuLink href="#contact">Contact us</MenuLink>
        <ThemeSwitch>
          <SwitchInput type="checkbox" role="switch" aria-label="Dark mode" />
          <SwitchKnob>
            <svg width="20" height="20" viewBox="0 0 20 20" fill="none" stroke="#fff" strokeWidth="1.400" strokeLinecap="round"><circle cx="10" cy="10" r="4.800" /><path d="M10 1v2M10 17v2M1 10h2M17 10h2M3.600 3.600l1.400 1.400M15 15l1.400 1.400M3.600 16.400L5 15M15 5l1.400-1.400" /></svg>
          </SwitchKnob>
          <svg width="18" height="18" viewBox="0 0 18 18" fill="#fff"><path d="M12.500.5C20 5 18 17.500 8.500 17.500 5 17.500 2 15.500.8 12.800 8 15 14.500 9 12.500.5z" /></svg>
        </ThemeSwitch>
      </Menu>
    </Header>
  );
}

function CountryPanel() {
  return (
    <Panel>
      <div>
        <SearchBox>
          <SearchInput type="search" placeholder="Search Country" aria-label="Search Country" />
          <svg width="16" height="16" viewBox="0 0 16 16" fill="none" stroke="currentColor" strokeWidth="1.800"><circle cx="6.500" cy="6.500" r="5.600" /><path d="M10.600 10.600l5 5" /></svg>
        </SearchBox>
        <CountryList>
          <CountryTable>
            <tbody>
              {countries.map((c) => (
                <CountryRow key={c.name}>
                  <CountryName scope="row">{c.name}</CountryName>
                  <StatCell><StatValue $color="#8b5cf6">{c.infections}</StatValue><StatLabel>Infections</StatLabel></StatCell>
                  <StatCell><StatValue $color="#10b981">{c.recovered}</StatValue><StatLabel>Recovered</StatLabel></StatCell>
                  <StatCell><StatValue $color="#dc2626">{c.deaths}</StatValue><StatLabel>Deaths</StatLabel></StatCell>
                </CountryRow>
              ))}
            </tbody>
          </CountryTable>
          <ScrollTrack><ScrollThumb $size="29px" /></ScrollTrack>
        </CountryList>
      </div>
      <MapCard><WorldMap /></MapCard>
    </Panel>
  );
}

function SystemTaskbar() {
  return (
    <Taskbar>
      <GhostStatus aria-hidden="true">
        <GhostPath>C:\xampp\htdocs\laravel\zenku-c\r</GhostPath>
        <GhostItem>
          <svg width="18" height="18" fill="none" stroke="currentColor" strokeWidth="2"><circle cx="9" cy="9" r="7.500" /><path d="M5.500 9l2.500 2.500L12.500 7" /></svg>
          Error
        </GhostItem>
        <span>LF</span>
        <span>UTF-8</span>
        <span>PHP</span>
        <GhostItem>
          <svg width="10" height="14" fill="none" stroke="currentColor" strokeWidth="2"><path d="M2 1v12M2 9q6 0 6-5V1" /></svg>
          master
        </GhostItem>
        <GhostItem>
          <svg width="14" height="14" fill="none" stroke="currentColor" strokeWidth="2"><circle cx="7" cy="7" r="6" /><path d="M7 3v5M7 9v2" /></svg>
          No remote
        </GhostItem>
        <GhostItem>
          <svg width="14" height="14" fill="none" stroke="currentColor" strokeWidth="3"><path d="M5 13v-3Q1 9 2 3q5-2 10 0 1 6-3 7v3" /></svg>
          GitHub
        </GhostItem>
        <GhostItem>
          <svg width="12" height="8" fill="none" stroke="currentColor" strokeWidth="2"><circle cx="6" cy="4" r="2.500" /><path d="M0 4h3M9 4h3" /></svg>
          Git (0)
        </GhostItem>
      </GhostStatus>
      <TaskbarItems>
        <StartButton aria-label="Start">
          <svg width="16" height="16" fill="#fff"><path d="M0 2.300L6.500 1.400v6.200H0zM7.300 1.300L16 0v7.600H7.300zM0 8.400h6.500v6.200L0 13.700zM7.300 8.400H16V16l-8.700-1.300z" /></svg>
        </StartButton>
        <TaskSearch placeholder="Rechercher sur le web et dans Windows" aria-label="Rechercher sur le web et dans Windows" />
        <TaskButton aria-label="Task view">
          <svg width="20" height="14" fill="none" stroke="#fff"><path d="M4.500.5h11v13h-11zM3 2.500H.5v9H3M17 2.500h2.500v9H17" /></svg>
        </TaskButton>
        {apps.map(({ name, icon: Icon, open, current }) => (
          <TaskButton key={name} aria-label={name} $open={open} $current={current}><Icon /></TaskButton>
        ))}
        <Tray>
          <svg width="14" height="16" fill="none" stroke="#fff" strokeWidth="1.400"><path d="M1 11l6-6 6 6" /></svg>
          <svg width="18" height="16" fill="none" stroke="#fff"><path d="M6 5.500h9.500v7H5M17 7.500v3M1 3v3h4V3M2 1v2M4 1v2M3 6v4h3" /><path d="M7 7h7v4H7z" fill="#fff" stroke="none" /></svg>
          <svg width="16" height="16" fill="none" stroke="#fff" strokeWidth="1.400"><path d="M2 15C2 8 7 3 14 3" stroke="#888" /><path d="M5.500 15c0-5 3.500-8.500 8.500-8.500M9 15c0-3 2-5 5-5" /><path d="M11 13h3v3h-3z" fill="#fff" stroke="none" /></svg>
          <svg width="17" height="16" fill="none" stroke="#fff"><path d="M1 6h2.500L7 2.500v11L3.500 10H1zM9 5.500q1.500 2.500 0 5M11.500 4q2.500 4 0 8M14 2.500q3.500 5.500 0 11" /></svg>
          <svg width="17" height="16"><path d="M0 1h16v11H4l-4 3z" fill="#fff" /><path d="M3 4h10M3 6.500h7M3 9h5" stroke="#000" /><circle cx="11.500" cy="11" r="4" fill="#000" stroke="#fff" /><path d="M9.500 11h4" stroke="#fff" /></svg>
          <Clock>22:20<br />13/08/2021</Clock>
        </Tray>
      </TaskbarItems>
    </Taskbar>
  );
}

export default function App() {
  return (
    <>
      <GlobalStyle />
      <Desktop>
        <BackWindowEdge />
        <BrowserWindow>
          <BrowserChrome />
          <Site>
            <SideNav />
            <Main>
              <SiteHeader />
              <PageTitle><TitleAccent>Covid-19</TitleAccent>World Updates</PageTitle>
              <CardGrid>
                {cards.map((c) => (
                  <Card key={c.title}>
                    <CardTitle>{c.title}</CardTitle>
                    {c.value && <CardValue $color={c.color}>{c.value}</CardValue>}
                    <CardFooter><Delta>{c.delta}</Delta><Rate $color={c.rateColor}>{c.rate}</Rate></CardFooter>
                  </Card>
                ))}
              </CardGrid>
              <CountryPanel />
            </Main>
            <PageScroll><ScrollTrack><ScrollThumb $size="55.200%" /></ScrollTrack></PageScroll>
          </Site>
        </BrowserWindow>
        <SystemTaskbar />
      </Desktop>
    </>
  );
}
